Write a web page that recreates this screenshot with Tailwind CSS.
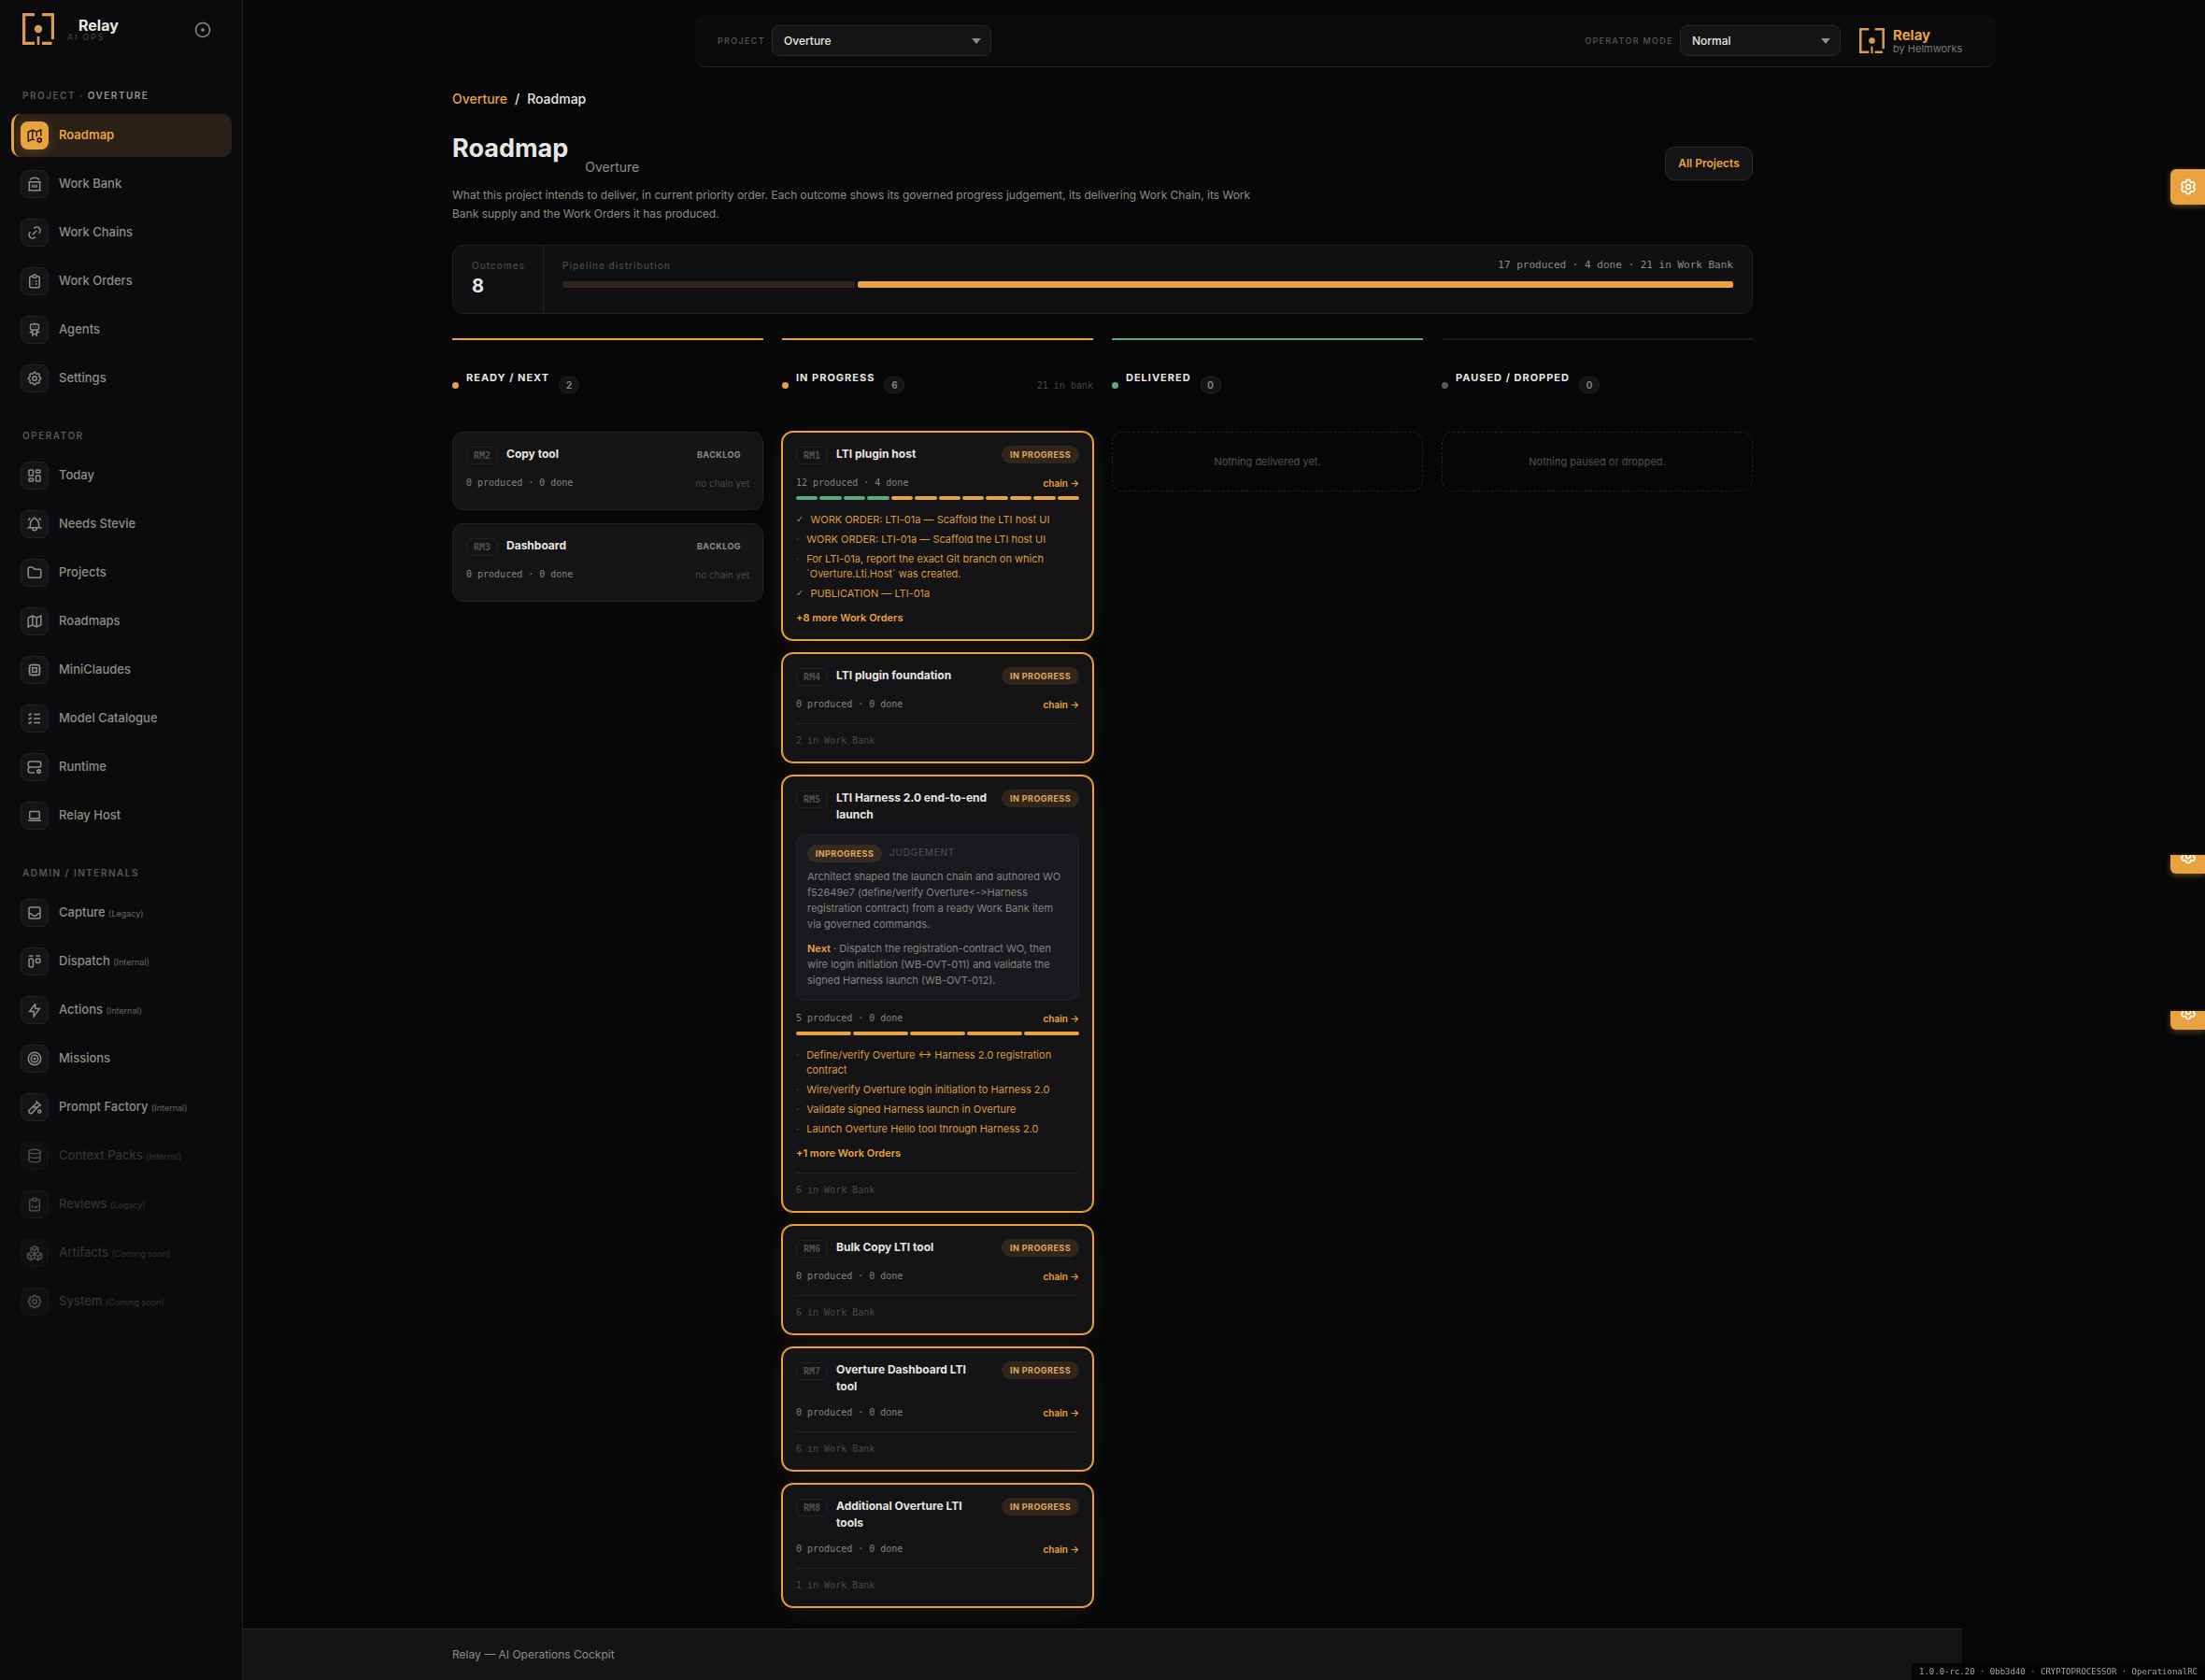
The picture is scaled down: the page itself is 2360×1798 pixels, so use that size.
<!DOCTYPE html>
<html lang="en">

<head>
    <meta charset="UTF-8">
    <meta name="viewport" content="width=device-width, initial-scale=1.0">
    <title>Roadmap - Relay</title>
    <script src="https://cdn.jsdelivr.net/npm/@tailwindcss/browser@4"></script>
</head>

<body class="bg-[#070709] font-['Inter',sans-serif] text-[#e8e6e1]">

    <!-- Icon sprite -->
    <svg class="hidden" xmlns="http://www.w3.org/2000/svg">
        <symbol id="i-logo" viewBox="0 0 34 34">
            <path d="M13 1.500H1.500v31H13M21 1.500h11.500v26.500M21 32.500h10.500" stroke="currentColor" stroke-width="3.400" fill="none" />
            <circle cx="17" cy="17" r="4.200" fill="currentColor" />
            <path d="M17 25v9" stroke="currentColor" stroke-width="2.600" />
        </symbol>
        <symbol id="i-map-cog" viewBox="0 0 24 24">
            <path d="M12 18.500l-3 -1.500l-6 3v-13l6 -3l6 3l6 -3v8.500M9 4v13M15 7v6.500" />
            <circle cx="19" cy="18.500" r="2.500" />
            <path d="M19 14.500v1.500M19 21v1.500M22.500 16.500l-1.300 .75M16.800 19.750l-1.300 .75M15.500 16.500l1.300 .75M21.200 19.750l1.300 .75" />
        </symbol>
        <symbol id="i-bank" viewBox="0 0 24 24">
            <path d="M5 6c2 -2 4 -3 7 -3s5 1 7 3M3 9h18M4.500 9v12M19.500 9v12M3 21h18M9 13v4M12 13v4M15 13v4" />
        </symbol>
        <symbol id="i-link" viewBox="0 0 24 24">
            <path d="M9 15l6 -6M11 6l.463 -.536a5 5 0 0 1 7.071 7.072l-.534 .464M13 18l-.397 .534a5.068 5.068 0 0 1 -7.127 0a4.972 4.972 0 0 1 0 -7.071l.524 -.463" />
        </symbol>
        <symbol id="i-clipboard-list" viewBox="0 0 24 24">
            <path d="M9 5h-2a2 2 0 0 0 -2 2v12a2 2 0 0 0 2 2h10a2 2 0 0 0 2 -2v-12a2 2 0 0 0 -2 -2h-2" />
            <path d="M9 5a2 2 0 0 1 2 -2h2a2 2 0 0 1 0 4h-2a2 2 0 0 1 -2 -2zM8.500 12h1M13 12h2.500M8.500 16h1M13 16h2.500" />
        </symbol>
        <symbol id="i-robot" viewBox="0 0 24 24">
            <path d="M6 6a2 2 0 0 1 2 -2h8a2 2 0 0 1 2 2v4a2 2 0 0 1 -2 2h-8a2 2 0 0 1 -2 -2zM12 2v2M9 12v9M15 12v9M5 16l4 -2M15 14l4 2M9 18h6M9.500 8h1M13.500 8h1" />
        </symbol>
        <symbol id="i-settings" viewBox="0 0 24 24">
            <path d="M10.325 4.317c.426 -1.756 2.924 -1.756 3.350 0a1.724 1.724 0 0 0 2.573 1.066c1.543 -.94 3.310 .826 2.370 2.370a1.724 1.724 0 0 0 1.065 2.572c1.756 .426 1.756 2.924 0 3.350a1.724 1.724 0 0 0 -1.066 2.573c.94 1.543 -.826 3.310 -2.370 2.370a1.724 1.724 0 0 0 -2.572 1.065c-.426 1.756 -2.924 1.756 -3.350 0a1.724 1.724 0 0 0 -2.573 -1.066c-1.543 .94 -3.310 -.826 -2.370 -2.370a1.724 1.724 0 0 0 -1.065 -2.572c-1.756 -.426 -1.756 -2.924 0 -3.350a1.724 1.724 0 0 0 1.066 -2.573c-.94 -1.543 .826 -3.310 2.370 -2.370c1 .608 2.296 .07 2.572 -1.065z" />
            <circle cx="12" cy="12" r="3" />
        </symbol>
        <symbol id="i-dashboard" viewBox="0 0 24 24">
            <rect x="4" y="4" width="6" height="8" rx="1" />
            <rect x="4" y="16" width="6" height="4" rx="1" />
            <rect x="14" y="12" width="6" height="8" rx="1" />
            <rect x="14" y="4" width="6" height="4" rx="1" />
        </symbol>
        <symbol id="i-bell" viewBox="0 0 24 24">
            <path d="M10 5a2 2 0 0 1 4 0a7 7 0 0 1 4 6v3a4 4 0 0 0 2 3h-16a4 4 0 0 0 2 -3v-3a7 7 0 0 1 4 -6M9 17v1a3 3 0 0 0 6 0v-1M21 6.727a11.050 11.050 0 0 0 -2.794 -3.727M3 6.727a11.050 11.050 0 0 1 2.792 -3.727" />
        </symbol>
        <symbol id="i-folder" viewBox="0 0 24 24">
            <path d="M5 4h4l3 3h7a2 2 0 0 1 2 2v8a2 2 0 0 1 -2 2h-14a2 2 0 0 1 -2 -2v-11a2 2 0 0 1 2 -2" />
        </symbol>
        <symbol id="i-map" viewBox="0 0 24 24">
            <path d="M3 7l6 -3l6 3l6 -3v13l-6 3l-6 -3l-6 3v-13M9 4v13M15 7v13" />
        </symbol>
        <symbol id="i-cpu" viewBox="0 0 24 24">
            <rect x="5" y="5" width="14" height="14" rx="1" />
            <path d="M9 9h6v6h-6zM3 10h2M3 14h2M10 3v2M14 3v2M21 10h-2M21 14h-2M14 21v-2M10 21v-2" />
        </symbol>
        <symbol id="i-list-check" viewBox="0 0 24 24">
            <path d="M3.500 5.500l1.500 1.500l2.500 -2.500M3.500 11.500l1.500 1.500l2.500 -2.500M3.500 17.500l1.500 1.500l2.500 -2.500M11 6h9M11 12h9M11 18h9" />
        </symbol>
        <symbol id="i-server-cog" viewBox="0 0 24 24">
            <path d="M6 4h12a3 3 0 0 1 3 3v2a3 3 0 0 1 -3 3h-12a3 3 0 0 1 -3 -3v-2a3 3 0 0 1 3 -3M12 20h-6a3 3 0 0 1 -3 -3v-2a3 3 0 0 1 3 -3h10.500M7 8v.01M7 16v.01" />
            <circle cx="18" cy="18" r="2" />
            <path d="M18 14.500v1.500M18 20v1.500M21.032 16.250l-1.299 .75M16.270 19l-1.300 .75M14.970 16.250l1.300 .75M19.733 19l1.300 .75" />
        </symbol>
        <symbol id="i-laptop" viewBox="0 0 24 24">
            <path d="M3 19h18" />
            <rect x="5" y="6" width="14" height="10" rx="1" />
        </symbol>
        <symbol id="i-inbox" viewBox="0 0 24 24">
            <rect x="4" y="4" width="16" height="16" rx="2" />
            <path d="M4 13h3l3 3h4l3 -3h3" />
        </symbol>
        <symbol id="i-kanban" viewBox="0 0 24 24">
            <path d="M4 4h6M14 4h6" />
            <rect x="4" y="8" width="6" height="12" rx="2" />
            <rect x="14" y="8" width="6" height="6" rx="2" />
        </symbol>
        <symbol id="i-bolt" viewBox="0 0 24 24">
            <path d="M13 3v7h6l-8 11v-7h-6l8 -11" />
        </symbol>
        <symbol id="i-target" viewBox="0 0 24 24">
            <circle cx="12" cy="12" r="1" />
            <circle cx="12" cy="12" r="5" />
            <circle cx="12" cy="12" r="9" />
        </symbol>
        <symbol id="i-tube" viewBox="0 0 24 24">
            <path d="M14 3l7 7M16 5l-12 11.500a3 3 0 0 0 4 4l11.500 -12M9.500 12h6" />
            <circle cx="19" cy="18" r="2" />
        </symbol>
        <symbol id="i-database" viewBox="0 0 24 24">
            <ellipse cx="12" cy="6" rx="8" ry="3" />
            <path d="M4 6v6a8 3 0 0 0 16 0v-6M4 12v6a8 3 0 0 0 16 0v-6" />
        </symbol>
        <symbol id="i-clipboard-check" viewBox="0 0 24 24">
            <path d="M9 5h-2a2 2 0 0 0 -2 2v12a2 2 0 0 0 2 2h10a2 2 0 0 0 2 -2v-12a2 2 0 0 0 -2 -2h-2" />
            <path d="M9 5a2 2 0 0 1 2 -2h2a2 2 0 0 1 0 4h-2a2 2 0 0 1 -2 -2zM9 13v4M12 15.500l1.500 1.500l2.500 -3" />
        </symbol>
        <symbol id="i-packages" viewBox="0 0 24 24">
            <path d="M7 16.500l-5 -3l5 -3l5 3v5.500l-5 3zM2 13.500v5.500l5 3M7 16.545l5 -3.030M17 16.500l-5 -3l5 -3l5 3v5.500l-5 3zM12 19l5 3M17 16.500l5 -3M12 13.500v-5.500l-5 -3l5 -3l5 3v5.500M7 5.030v5.455M12 8l5 -3" />
        </symbol>
        <symbol id="i-cog" viewBox="0 0 24 24">
            <path d="M9.594 3.940c.09-.542.56-.94 1.110-.94h2.593c.55 0 1.020.398 1.110.94l.213 1.281c.063.374.313.686.645.87.074.04.147.083.22.127.325.196.72.257 1.075.124l1.217-.456a1.125 1.125 0 0 1 1.370.49l1.296 2.247a1.125 1.125 0 0 1-.26 1.431l-1.003.827c-.293.241-.438.613-.43.992a7.723 7.723 0 0 1 0 .255c-.008.378.137.75.43.991l1.004.827c.424.35.534.955.26 1.430l-1.298 2.247a1.125 1.125 0 0 1-1.369.491l-1.217-.456c-.355-.133-.75-.072-1.076.124a6.470 6.470 0 0 1-.22.128c-.331.183-.581.495-.644.869l-.213 1.281c-.09.543-.56.94-1.110.94h-2.594c-.55 0-1.019-.398-1.110-.94l-.213-1.281c-.062-.374-.312-.686-.644-.87a6.520 6.520 0 0 1-.22-.127c-.325-.196-.72-.257-1.076-.124l-1.217.456a1.125 1.125 0 0 1-1.369-.49l-1.297-2.247a1.125 1.125 0 0 1 .26-1.431l1.004-.827c.292-.24.437-.613.43-.991a6.932 6.932 0 0 1 0-.255c.007-.38-.138-.751-.43-.992l-1.004-.827a1.125 1.125 0 0 1-.26-1.430l1.297-2.247a1.125 1.125 0 0 1 1.370-.491l1.216.456c.356.133.751.072 1.076-.124.072-.044.146-.086.22-.128.332-.183.582-.495.644-.869z" />
            <circle cx="12" cy="12" r="3" />
        </symbol>
    </svg>

    <div class="flex min-h-screen">

        <!-- Sidebar -->
        <aside class="w-[260px] shrink-0 border-r border-[#222225] bg-[#0b0b0e] pr-[11px] pl-3">
            <div class="flex h-[94px] items-start px-3 pt-[14px]">
                <svg class="size-[34px] shrink-0 text-[#d79a52]"><use href="#i-logo" /></svg>
                <div class="ml-[14px] flex-1 pt-[5px]">
                    <p class="ml-3 text-base leading-4 font-bold">Relay</p>
                    <p class="text-[9px] leading-[10px] tracking-[0.2em] text-[#4b4843]">AI OPS</p>
                </div>
                <button type="button" aria-label="Pin sidebar" class="mt-[9px] mr-[10px] grid size-[18px] place-items-center text-[#8f8a82]">
                    <svg class="size-[18px]" viewBox="0 0 18 18" fill="none"><circle cx="9" cy="9" r="7.500" stroke="currentColor" stroke-width="1.500" /><circle cx="9" cy="9" r="1.800" fill="currentColor" /></svg>
                </button>
            </div>

            <h2 class="mb-3 px-3 text-[10px] leading-4 font-semibold tracking-[0.15em] text-[#5c5850]">PROJECT · <span class="text-[#9b958b]">OVERTURE</span></h2>
            <nav class="mb-[30px] flex flex-col gap-[6px] text-[13px] font-medium text-[#918c83]">
                <a href="#" class="flex h-[46px] items-center gap-[11px] rounded-[10px] border-l-3 border-[#e9a23f] bg-[#2a2016] pl-[7px] font-semibold text-[#e9a23f]">
                    <span class="grid size-[30px] place-items-center rounded-lg bg-[#e9a23f] text-[#2a1c08] shadow-[0_2px_12px_#e9a23f40]"><svg class="size-[18px] fill-none stroke-current stroke-2"><use href="#i-map-cog" /></svg></span>Roadmap</a>
                <a href="#" class="flex h-[46px] items-center gap-[11px] pl-[10px]">
                    <span class="grid size-[30px] place-items-center rounded-lg border border-[#222225] bg-[#141416]"><svg class="size-[18px] fill-none stroke-current stroke-2"><use href="#i-bank" /></svg></span>Work Bank</a>
                <a href="#" class="flex h-[46px] items-center gap-[11px] pl-[10px]">
                    <span class="grid size-[30px] place-items-center rounded-lg border border-[#222225] bg-[#141416]"><svg class="size-[18px] fill-none stroke-current stroke-2"><use href="#i-link" /></svg></span>Work Chains</a>
                <a href="#" class="flex h-[46px] items-center gap-[11px] pl-[10px]">
                    <span class="grid size-[30px] place-items-center rounded-lg border border-[#222225] bg-[#141416]"><svg class="size-[18px] fill-none stroke-current stroke-2"><use href="#i-clipboard-list" /></svg></span>Work Orders</a>
                <a href="#" class="flex h-[46px] items-center gap-[11px] pl-[10px]">
                    <span class="grid size-[30px] place-items-center rounded-lg border border-[#222225] bg-[#141416]"><svg class="size-[18px] fill-none stroke-current stroke-2"><use href="#i-robot" /></svg></span>Agents</a>
                <a href="#" class="flex h-[46px] items-center gap-[11px] pl-[10px]">
                    <span class="grid size-[30px] place-items-center rounded-lg border border-[#222225] bg-[#141416]"><svg class="size-[18px] fill-none stroke-current stroke-2"><use href="#i-settings" /></svg></span>Settings</a>
            </nav>

            <h2 class="mb-3 px-3 text-[10px] leading-4 font-semibold tracking-[0.15em] text-[#5c5850]">OPERATOR</h2>
            <nav class="mb-[30px] flex flex-col gap-[6px] text-[13px] font-medium text-[#918c83]">
                <a href="#" class="flex h-[46px] items-center gap-[11px] pl-[10px]">
                    <span class="grid size-[30px] place-items-center rounded-lg border border-[#222225] bg-[#141416]"><svg class="size-[18px] fill-none stroke-current stroke-2"><use href="#i-dashboard" /></svg></span>Today</a>
                <a href="#" class="flex h-[46px] items-center gap-[11px] pl-[10px]">
                    <span class="grid size-[30px] place-items-center rounded-lg border border-[#222225] bg-[#141416]"><svg class="size-[18px] fill-none stroke-current stroke-2"><use href="#i-bell" /></svg></span>Needs Stevie</a>
                <a href="#" class="flex h-[46px] items-center gap-[11px] pl-[10px]">
                    <span class="grid size-[30px] place-items-center rounded-lg border border-[#222225] bg-[#141416]"><svg class="size-[18px] fill-none stroke-current stroke-2"><use href="#i-folder" /></svg></span>Projects</a>
                <a href="#" class="flex h-[46px] items-center gap-[11px] pl-[10px]">
                    <span class="grid size-[30px] place-items-center rounded-lg border border-[#222225] bg-[#141416]"><svg class="size-[18px] fill-none stroke-current stroke-2"><use href="#i-map" /></svg></span>Roadmaps</a>
                <a href="#" class="flex h-[46px] items-center gap-[11px] pl-[10px]">
                    <span class="grid size-[30px] place-items-center rounded-lg border border-[#222225] bg-[#141416]"><svg class="size-[18px] fill-none stroke-current stroke-2"><use href="#i-cpu" /></svg></span>MiniClaudes</a>
                <a href="#" class="flex h-[46px] items-center gap-[11px] pl-[10px]">
                    <span class="grid size-[30px] place-items-center rounded-lg border border-[#222225] bg-[#141416]"><svg class="size-[18px] fill-none stroke-current stroke-2"><use href="#i-list-check" /></svg></span>Model Catalogue</a>
                <a href="#" class="flex h-[46px] items-center gap-[11px] pl-[10px]">
                    <span class="grid size-[30px] place-items-center rounded-lg border border-[#222225] bg-[#141416]"><svg class="size-[18px] fill-none stroke-current stroke-2"><use href="#i-server-cog" /></svg></span>Runtime</a>
                <a href="#" class="flex h-[46px] items-center gap-[11px] pl-[10px]">
                    <span class="grid size-[30px] place-items-center rounded-lg border border-[#222225] bg-[#141416]"><svg class="size-[18px] fill-none stroke-current stroke-2"><use href="#i-laptop" /></svg></span>Relay Host</a>
            </nav>

            <h2 class="mb-3 px-3 text-[10px] leading-4 font-semibold tracking-[0.15em] text-[#5c5850]">ADMIN / INTERNALS</h2>
            <nav class="flex flex-col gap-[6px] text-[13px] font-medium text-[#918c83]">
                <a href="#" class="flex h-[46px] items-center gap-[11px] pl-[10px]">
                    <span class="grid size-[30px] place-items-center rounded-lg border border-[#222225] bg-[#141416]"><svg class="size-[18px] fill-none stroke-current stroke-2"><use href="#i-inbox" /></svg></span>
                    <span>Capture <small class="text-[9px] font-normal text-[#6a665f]">(Legacy)</small></span></a>
                <a href="#" class="flex h-[46px] items-center gap-[11px] pl-[10px]">
                    <span class="grid size-[30px] place-items-center rounded-lg border border-[#222225] bg-[#141416]"><svg class="size-[18px] fill-none stroke-current stroke-2"><use href="#i-kanban" /></svg></span>
                    <span>Dispatch <small class="text-[9px] font-normal text-[#6a665f]">(Internal)</small></span></a>
                <a href="#" class="flex h-[46px] items-center gap-[11px] pl-[10px]">
                    <span class="grid size-[30px] place-items-center rounded-lg border border-[#222225] bg-[#141416]"><svg class="size-[18px] fill-none stroke-current stroke-2"><use href="#i-bolt" /></svg></span>
                    <span>Actions <small class="text-[9px] font-normal text-[#6a665f]">(Internal)</small></span></a>
                <a href="#" class="flex h-[46px] items-center gap-[11px] pl-[10px]">
                    <span class="grid size-[30px] place-items-center rounded-lg border border-[#222225] bg-[#141416]"><svg class="size-[18px] fill-none stroke-current stroke-2"><use href="#i-target" /></svg></span>Missions</a>
                <a href="#" class="flex h-[46px] items-center gap-[11px] pl-[10px]">
                    <span class="grid size-[30px] place-items-center rounded-lg border border-[#222225] bg-[#141416]"><svg class="size-[18px] fill-none stroke-current stroke-2"><use href="#i-tube" /></svg></span>
                    <span>Prompt Factory <small class="text-[9px] font-normal text-[#6a665f]">(Internal)</small></span></a>
                <!-- not available yet -->
                <a class="flex h-[46px] items-center gap-[11px] pl-[10px] text-[#343230]">
                    <span class="grid size-[30px] place-items-center rounded-lg border border-[#17171a] bg-[#101012] text-[#504d49]"><svg class="size-[18px] fill-none stroke-current stroke-2"><use href="#i-database" /></svg></span>
                    <span>Context Packs <small class="text-[9px] font-normal">(Internal)</small></span></a>
                <a class="flex h-[46px] items-center gap-[11px] pl-[10px] text-[#343230]">
                    <span class="grid size-[30px] place-items-center rounded-lg border border-[#17171a] bg-[#101012] text-[#504d49]"><svg class="size-[18px] fill-none stroke-current stroke-2"><use href="#i-clipboard-check" /></svg></span>
                    <span>Reviews <small class="text-[9px] font-normal">(Legacy)</small></span></a>
                <a class="flex h-[46px] items-center gap-[11px] pl-[10px] text-[#343230]">
                    <span class="grid size-[30px] place-items-center rounded-lg border border-[#17171a] bg-[#101012] text-[#504d49]"><svg class="size-[18px] fill-none stroke-current stroke-2"><use href="#i-packages" /></svg></span>
                    <span>Artifacts <small class="text-[9px] font-normal">(Coming soon)</small></span></a>
                <a class="flex h-[46px] items-center gap-[11px] pl-[10px] text-[#343230]">
                    <span class="grid size-[30px] place-items-center rounded-lg border border-[#17171a] bg-[#101012] text-[#504d49]"><svg class="size-[18px] fill-none stroke-current stroke-2"><use href="#i-settings" /></svg></span>
                    <span>System <small class="text-[9px] font-normal">(Coming soon)</small></span></a>
            </nav>
        </aside>

        <div class="flex min-w-0 flex-1 flex-col">

            <!-- Top bar -->
            <div class="pt-4 pl-[260px]">
                <header class="mx-auto flex h-14 max-w-[1392px] items-center rounded-[10px] border-b border-[#222225] bg-[#0b0b0d] px-6">
                    <label for="project" class="mr-[7px] text-[9px] font-medium tracking-[0.15em] text-[#5c5850]">PROJECT</label>
                    <div class="relative">
                        <select id="project" class="h-[33px] w-[235px] appearance-none rounded-lg border border-[#29292c] bg-[#141416] pl-3 text-xs font-medium text-[#e8e6e1]">
                            <option>Overture</option>
                        </select>
                        <svg class="pointer-events-none absolute top-[14px] right-[11px] h-[6px] w-[10px] fill-[#918c83]" viewBox="0 0 10 6"><path d="M0 0h10l-5 6z" /></svg>
                    </div>
                    <label for="mode" class="mr-[7px] ml-auto text-[9px] font-medium tracking-[0.15em] text-[#5c5850]">OPERATOR MODE</label>
                    <div class="relative">
                        <select id="mode" class="h-[33px] w-[172px] appearance-none rounded-lg border border-[#29292c] bg-[#141416] pl-3 text-xs font-medium text-[#e8e6e1]">
                            <option>Normal</option>
                        </select>
                        <svg class="pointer-events-none absolute top-[14px] right-[11px] h-[6px] w-[10px] fill-[#918c83]" viewBox="0 0 10 6"><path d="M0 0h10l-5 6z" /></svg>
                    </div>
                    <svg class="ml-5 size-[27px] text-[#d79a52]"><use href="#i-logo" /></svg>
                    <div class="mr-[9px] ml-[9px] w-[77px]">
                        <p class="text-[15px] leading-4 font-bold text-[#e9a23f]">Relay</p>
                        <p class="text-[11px] leading-3 text-[#7d7972]">by Helmworks</p>
                    </div>
                </header>
            </div>

            <!-- Page -->
            <div class="flex flex-1 flex-col pr-[260px]">
                <main class="mx-auto w-full max-w-[1392px] flex-1 pt-6 pb-5">
                    <nav class="flex gap-2 text-sm leading-5 font-medium">
                        <a href="#" class="text-[#e9a23f]">Overture</a><span>/</span><span>Roadmap</span>
                    </nav>

                    <div class="mt-[27px] flex items-start justify-between">
                        <div>
                            <div class="flex items-end gap-[18px]">
                                <h1 class="mb-[15px] text-[27px] leading-8 font-bold">Roadmap</h1>
                                <p class="mb-[2px] text-sm leading-[18px] text-[#918c83]">Overture</p>
                            </div>
                            <p class="mt-[9px] max-w-[872px] text-xs leading-5 text-[#918c83]">What this project intends to deliver, in current priority order. Each outcome shows its governed progress judgement, its delivering Work Chain, its Work Bank supply and the Work Orders it has produced.</p>
                        </div>
                        <button type="button" class="mt-[14px] h-9 w-[94px] rounded-[10px] border border-[#29292c] bg-[#141416] text-xs font-semibold text-[#e9a23f]">All Projects</button>
                    </div>

                    <!-- Summary -->
                    <section class="mt-[23px] flex h-[74px] rounded-xl border border-[#222225] bg-[#101012]">
                        <div class="w-[97px] border-r border-[#222225] pt-[13px] pl-5">
                            <p class="text-[10px] leading-4 font-medium tracking-[0.1em] text-[#4b4843]">Outcomes</p>
                            <p class="text-xl leading-7 font-bold">8</p>
                        </div>
                        <div class="flex-1 px-5 pt-[13px]">
                            <div class="flex items-center justify-between leading-4">
                                <p class="text-[10px] font-medium tracking-[0.1em] text-[#4b4843]">Pipeline distribution</p>
                                <p class="font-['DejaVu_Sans_Mono',monospace] text-[11px] text-[#918c83]">17 produced · 4 done · 21 in Work Bank</p>
                            </div>
                            <div class="mt-[9px] flex h-[7px] gap-[3px]">
                                <div class="rounded-[2px] bg-[#2e2419]" style="flex: 2"></div>
                                <div class="rounded-[2px] bg-[#e9a23f]" style="flex: 6"></div>
                            </div>
                        </div>
                    </section>

                    <!-- Board -->
                    <div class="mt-[26px] grid grid-cols-4 items-start gap-5">

                        <section class="border-t-2 border-[#e9a23f]">
                            <header class="mb-[2px] flex h-24 items-center">
                                <span class="size-[7px] rounded-full bg-[#e9a23f]"></span>
                                <h2 class="mb-4 ml-2 text-[11px] leading-4 font-bold tracking-[0.09em]">READY / NEXT</h2>
                                <span class="ml-[10px] grid h-[18px] w-[22px] place-items-center rounded-full border border-[#222225] bg-[#141416] text-[10px] font-semibold text-[#918c83]">2</span>
                            </header>
                            <div class="flex flex-col gap-[14px]">
                                <article class="rounded-xl border border-[#222225] bg-[#141416] p-[14px]">
                                    <div class="mb-3 flex items-start">
                                        <span class="mt-px h-[19px] w-[34px] rounded-md border border-[#222225] text-center font-['DejaVu_Sans_Mono',monospace] text-[10px] leading-[17px] font-bold text-[#54514c]">RM2</span>
                                        <h3 class="ml-[9px] flex-1 text-xs leading-[18px] font-bold">Copy tool</h3>
                                        <span class="h-[19px] w-[65px] rounded-full bg-[#161618] text-center text-[9px] leading-[19px] font-bold tracking-[0.05em] text-[#918c83]">BACKLOG</span>
                                    </div>
                                    <div class="mb-[6px] flex items-center justify-between leading-4">
                                        <span class="font-['DejaVu_Sans_Mono',monospace] text-[10px] text-[#87837b]">0 produced · 0 done</span>
                                        <span class="text-[10px] text-[#4b4843]">no chain yet</span>
                                    </div>
                                </article>
                                <article class="rounded-xl border border-[#222225] bg-[#141416] p-[14px]">
                                    <div class="mb-3 flex items-start">
                                        <span class="mt-px h-[19px] w-[34px] rounded-md border border-[#222225] text-center font-['DejaVu_Sans_Mono',monospace] text-[10px] leading-[17px] font-bold text-[#54514c]">RM3</span>
                                        <h3 class="ml-[9px] flex-1 text-xs leading-[18px] font-bold">Dashboard</h3>
                                        <span class="h-[19px] w-[65px] rounded-full bg-[#161618] text-center text-[9px] leading-[19px] font-bold tracking-[0.05em] text-[#918c83]">BACKLOG</span>
                                    </div>
                                    <div class="mb-[6px] flex items-center justify-between leading-4">
                                        <span class="font-['DejaVu_Sans_Mono',monospace] text-[10px] text-[#87837b]">0 produced · 0 done</span>
                                        <span class="text-[10px] text-[#4b4843]">no chain yet</span>
                                    </div>
                                </article>
                            </div>
                        </section>

                        <section class="border-t-2 border-[#e9a23f]">
                            <header class="mb-[2px] flex h-24 items-center">
                                <span class="size-[7px] rounded-full bg-[#e9a23f]"></span>
                                <h2 class="mb-4 ml-2 text-[11px] leading-4 font-bold tracking-[0.09em]">IN PROGRESS</h2>
                                <span class="ml-[10px] grid h-[18px] w-[22px] place-items-center rounded-full border border-[#222225] bg-[#141416] text-[10px] font-semibold text-[#918c83]">6</span>
                                <span class="ml-auto font-['DejaVu_Sans_Mono',monospace] text-[10px] text-[#4b4843]">21 in bank</span>
                            </header>
                            <div class="flex flex-col gap-[14px]">
                                <article class="rounded-xl border border-[#e9a23f] bg-[#141416] p-[14px] shadow-[0_0_0_1px_#e9a23f,0_4px_24px_#e9a23f1a]">
                                    <div class="mb-3 flex items-start">
                                        <span class="mt-px h-[19px] w-[34px] rounded-md border border-[#222225] text-center font-['DejaVu_Sans_Mono',monospace] text-[10px] leading-[17px] font-bold text-[#54514c]">RM1</span>
                                        <h3 class="mr-[14px] ml-[9px] flex-1 text-xs leading-[18px] font-bold">LTI plugin host</h3>
                                        <span class="h-[19px] w-[83px] rounded-full bg-[#30261a] text-center text-[9px] leading-[19px] font-bold tracking-[0.05em] text-[#e0a760]">IN PROGRESS</span>
                                    </div>
                                    <div class="mb-[6px] flex items-center justify-between leading-4">
                                        <span class="font-['DejaVu_Sans_Mono',monospace] text-[10px] text-[#87837b]">12 produced · 4 done</span>
                                        <a href="#" class="text-[10px] font-semibold text-[#e9a23f]">chain →</a>
                                    </div>
                                    <div class="flex h-1 gap-[2px]">
                                        <i class="flex-1 rounded-full bg-[#56ad7c]"></i>
                                        <i class="flex-1 rounded-full bg-[#56ad7c]"></i>
                                        <i class="flex-1 rounded-full bg-[#56ad7c]"></i>
                                        <i class="flex-1 rounded-full bg-[#56ad7c]"></i>
                                        <i class="flex-1 rounded-full bg-[#e9a23f]"></i>
                                        <i class="flex-1 rounded-full bg-[#e9a23f]"></i>
                                        <i class="flex-1 rounded-full bg-[#e9a23f]"></i>
                                        <i class="flex-1 rounded-full bg-[#e9a23f]"></i>
                                        <i class="flex-1 rounded-full bg-[#e9a23f]"></i>
                                        <i class="flex-1 rounded-full bg-[#e9a23f]"></i>
                                        <i class="flex-1 rounded-full bg-[#e9a23f]"></i>
                                        <i class="flex-1 rounded-full bg-[#e9a23f]"></i>
                                    </div>
                                    <ul class="mt-[13px] flex flex-col gap-[5px] text-[11px] leading-4 text-[#dd9b3d]">
                                        <li class="flex gap-[7px]"><span class="font-['DejaVu_Sans',sans-serif] text-[10px] text-[#56ad7c]">✓</span><a href="#">WORK ORDER: LTI-01a — Scaffold the LTI host UI</a></li>
                                        <li class="flex gap-2"><span class="text-[#5c5850]">·</span><a href="#">WORK ORDER: LTI-01a — Scaffold the LTI host UI</a></li>
                                        <li class="flex gap-2"><span class="text-[#5c5850]">·</span><a href="#">For LTI-01a, report the exact Git branch on which `Overture.Lti.Host` was created.</a></li>
                                        <li class="flex gap-[7px]"><span class="font-['DejaVu_Sans',sans-serif] text-[10px] text-[#56ad7c]">✓</span><a href="#">PUBLICATION — LTI-01a</a></li>
                                    </ul>
                                    <button type="button" class="mt-[10px] block text-[11px] leading-[17px] font-semibold text-[#e9a23f]">+8 more Work Orders</button>
                                </article>

                                <article class="rounded-xl border border-[#e9a23f] bg-[#141416] p-[14px] shadow-[0_0_0_1px_#e9a23f,0_4px_24px_#e9a23f1a]">
                                    <div class="mb-3 flex items-start">
                                        <span class="mt-px h-[19px] w-[34px] rounded-md border border-[#222225] text-center font-['DejaVu_Sans_Mono',monospace] text-[10px] leading-[17px] font-bold text-[#54514c]">RM4</span>
                                        <h3 class="mr-[14px] ml-[9px] flex-1 text-xs leading-[18px] font-bold">LTI plugin foundation</h3>
                                        <span class="h-[19px] w-[83px] rounded-full bg-[#30261a] text-center text-[9px] leading-[19px] font-bold tracking-[0.05em] text-[#e0a760]">IN PROGRESS</span>
                                    </div>
                                    <div class="mb-3 flex items-center justify-between leading-4">
                                        <span class="font-['DejaVu_Sans_Mono',monospace] text-[10px] text-[#87837b]">0 produced · 0 done</span>
                                        <a href="#" class="text-[10px] font-semibold text-[#e9a23f]">chain →</a>
                                    </div>
                                    <p class="border-t border-[#222225] pt-[10px] font-['DejaVu_Sans_Mono',monospace] text-[10px] leading-4 text-[#4b4843]">2 in Work Bank</p>
                                </article>

                                <article class="rounded-xl border border-[#e9a23f] bg-[#141416] p-[14px] shadow-[0_0_0_1px_#e9a23f,0_4px_24px_#e9a23f1a]">
                                    <div class="mb-3 flex items-start">
                                        <span class="mt-px h-[19px] w-[34px] rounded-md border border-[#222225] text-center font-['DejaVu_Sans_Mono',monospace] text-[10px] leading-[17px] font-bold text-[#54514c]">RM5</span>
                                        <h3 class="mr-[14px] ml-[9px] flex-1 text-xs leading-[18px] font-bold">LTI Harness 2.0 end-to-end launch</h3>
                                        <span class="h-[19px] w-[83px] rounded-full bg-[#30261a] text-center text-[9px] leading-[19px] font-bold tracking-[0.05em] text-[#e0a760]">IN PROGRESS</span>
                                    </div>
                                    <div class="rounded-[10px] border border-[#222228] bg-[#191a20] px-[11px] pt-[10px] pb-3 text-[11px] leading-[17px] text-[#87837b]">
                                        <div class="flex items-start gap-2">
                                            <span class="h-[19px] w-20 rounded-full bg-[#352b22] text-center text-[9px] leading-[19px] font-bold tracking-[0.05em] text-[#e0a760]">INPROGRESS</span>
                                            <span class="text-[10px] tracking-[0.08em] text-[#54514c]">JUDGEMENT</span>
                                        </div>
                                        <p class="mt-[7px] [font-feature-settings:'calt'_0]">Architect shaped the launch chain and authored WO f52649e7 (define/verify Overture&lt;-&gt;Harness registration contract) from a ready Work Bank item via governed commands.</p>
                                        <p class="mt-[9px]"><b class="font-semibold text-[#e9a23f]">Next</b> · Dispatch the registration-contract WO, then wire login initiation (WB-OVT-011) and validate the signed Harness launch (WB-OVT-012).</p>
                                    </div>
                                    <div class="mt-[11px] mb-[6px] flex items-center justify-between leading-4">
                                        <span class="font-['DejaVu_Sans_Mono',monospace] text-[10px] text-[#87837b]">5 produced · 0 done</span>
                                        <a href="#" class="text-[10px] font-semibold text-[#e9a23f]">chain →</a>
                                    </div>
                                    <div class="flex h-1 gap-[2px]">
                                        <i class="flex-1 rounded-full bg-[#e9a23f]"></i>
                                        <i class="flex-1 rounded-full bg-[#e9a23f]"></i>
                                        <i class="flex-1 rounded-full bg-[#e9a23f]"></i>
                                        <i class="flex-1 rounded-full bg-[#e9a23f]"></i>
                                        <i class="flex-1 rounded-full bg-[#e9a23f]"></i>
                                    </div>
                                    <ul class="mt-[13px] flex flex-col gap-[5px] text-[11px] leading-4 text-[#dd9b3d]">
                                        <li class="flex gap-2"><span class="text-[#5c5850]">·</span><a href="#">Define/verify Overture ↔ Harness 2.0 registration contract</a></li>
                                        <li class="flex gap-2"><span class="text-[#5c5850]">·</span><a href="#">Wire/verify Overture login initiation to Harness 2.0</a></li>
                                        <li class="flex gap-2"><span class="text-[#5c5850]">·</span><a href="#">Validate signed Harness launch in Overture</a></li>
                                        <li class="flex gap-2"><span class="text-[#5c5850]">·</span><a href="#">Launch Overture Hello tool through Harness 2.0</a></li>
                                    </ul>
                                    <button type="button" class="mt-[10px] mb-3 block text-[11px] leading-[17px] font-semibold text-[#e9a23f]">+1 more Work Orders</button>
                                    <p class="border-t border-[#222225] pt-[10px] font-['DejaVu_Sans_Mono',monospace] text-[10px] leading-4 text-[#4b4843]">6 in Work Bank</p>
                                </article>

                                <article class="rounded-xl border border-[#e9a23f] bg-[#141416] p-[14px] shadow-[0_0_0_1px_#e9a23f,0_4px_24px_#e9a23f1a]">
                                    <div class="mb-3 flex items-start">
                                        <span class="mt-px h-[19px] w-[34px] rounded-md border border-[#222225] text-center font-['DejaVu_Sans_Mono',monospace] text-[10px] leading-[17px] font-bold text-[#54514c]">RM6</span>
                                        <h3 class="mr-[14px] ml-[9px] flex-1 text-xs leading-[18px] font-bold">Bulk Copy LTI tool</h3>
                                        <span class="h-[19px] w-[83px] rounded-full bg-[#30261a] text-center text-[9px] leading-[19px] font-bold tracking-[0.05em] text-[#e0a760]">IN PROGRESS</span>
                                    </div>
                                    <div class="mb-3 flex items-center justify-between leading-4">
                                        <span class="font-['DejaVu_Sans_Mono',monospace] text-[10px] text-[#87837b]">0 produced · 0 done</span>
                                        <a href="#" class="text-[10px] font-semibold text-[#e9a23f]">chain →</a>
                                    </div>
                                    <p class="border-t border-[#222225] pt-[10px] font-['DejaVu_Sans_Mono',monospace] text-[10px] leading-4 text-[#4b4843]">6 in Work Bank</p>
                                </article>

                                <article class="rounded-xl border border-[#e9a23f] bg-[#141416] p-[14px] shadow-[0_0_0_1px_#e9a23f,0_4px_24px_#e9a23f1a]">
                                    <div class="mb-[11px] flex items-start">
                                        <span class="mt-px h-[19px] w-[34px] rounded-md border border-[#222225] text-center font-['DejaVu_Sans_Mono',monospace] text-[10px] leading-[17px] font-bold text-[#54514c]">RM7</span>
                                        <h3 class="mr-[14px] ml-[9px] flex-1 text-xs leading-[18px] font-bold">Overture Dashboard LTI tool</h3>
                                        <span class="h-[19px] w-[83px] rounded-full bg-[#30261a] text-center text-[9px] leading-[19px] font-bold tracking-[0.05em] text-[#e0a760]">IN PROGRESS</span>
                                    </div>
                                    <div class="mb-3 flex items-center justify-between leading-4">
                                        <span class="font-['DejaVu_Sans_Mono',monospace] text-[10px] text-[#87837b]">0 produced · 0 done</span>
                                        <a href="#" class="text-[10px] font-semibold text-[#e9a23f]">chain →</a>
                                    </div>
                                    <p class="border-t border-[#222225] pt-[10px] font-['DejaVu_Sans_Mono',monospace] text-[10px] leading-4 text-[#4b4843]">6 in Work Bank</p>
                                </article>

                                <article class="rounded-xl border border-[#e9a23f] bg-[#141416] p-[14px] shadow-[0_0_0_1px_#e9a23f,0_4px_24px_#e9a23f1a]">
                                    <div class="mb-[11px] flex items-start">
                                        <span class="mt-px h-[19px] w-[34px] rounded-md border border-[#222225] text-center font-['DejaVu_Sans_Mono',monospace] text-[10px] leading-[17px] font-bold text-[#54514c]">RM8</span>
                                        <h3 class="mr-[14px] ml-[9px] flex-1 text-xs leading-[18px] font-bold">Additional Overture LTI tools</h3>
                                        <span class="h-[19px] w-[83px] rounded-full bg-[#30261a] text-center text-[9px] leading-[19px] font-bold tracking-[0.05em] text-[#e0a760]">IN PROGRESS</span>
                                    </div>
                                    <div class="mb-3 flex items-center justify-between leading-4">
                                        <span class="font-['DejaVu_Sans_Mono',monospace] text-[10px] text-[#87837b]">0 produced · 0 done</span>
                                        <a href="#" class="text-[10px] font-semibold text-[#e9a23f]">chain →</a>
                                    </div>
                                    <p class="border-t border-[#222225] pt-[10px] font-['DejaVu_Sans_Mono',monospace] text-[10px] leading-4 text-[#4b4843]">1 in Work Bank</p>
                                </article>
                            </div>
                        </section>

                        <section class="border-t-2 border-[#56ad7c]">
                            <header class="mb-[2px] flex h-24 items-center">
                                <span class="size-[7px] rounded-full bg-[#56ad7c]"></span>
                                <h2 class="mb-4 ml-2 text-[11px] leading-4 font-bold tracking-[0.09em]">DELIVERED</h2>
                                <span class="ml-[10px] grid h-[18px] w-[22px] place-items-center rounded-full border border-[#222225] bg-[#141416] text-[10px] font-semibold text-[#918c83]">0</span>
                            </header>
                            <p class="grid h-16 place-items-center rounded-xl border border-dashed border-[#222225] text-[11px] text-[#54514c]">Nothing delivered yet.</p>
                        </section>

                        <section class="border-t-2 border-[#1a1a1c]">
                            <header class="mb-[2px] flex h-24 items-center">
                                <span class="size-[7px] rounded-full bg-[#5c5850]"></span>
                                <h2 class="mb-4 ml-2 text-[11px] leading-4 font-bold tracking-[0.09em]">PAUSED / DROPPED</h2>
                                <span class="ml-[10px] grid h-[18px] w-[22px] place-items-center rounded-full border border-[#222225] bg-[#141416] text-[10px] font-semibold text-[#918c83]">0</span>
                            </header>
                            <p class="grid h-16 place-items-center rounded-xl border border-dashed border-[#222225] text-[11px] text-[#54514c]">Nothing paused or dropped.</p>
                        </section>
                    </div>
                </main>

                <footer class="border-t border-[#29292c] bg-[#141416]">
                    <p class="mx-auto max-w-[1392px] py-[18px] text-xs leading-[18px] text-[#918c83]">Relay — AI Operations Cockpit</p>
                </footer>
            </div>
        </div>
    </div>

    <!-- Edge tabs -->
    <button type="button" aria-label="Settings" class="fixed top-[181px] right-0 grid h-[38px] w-[37px] place-items-center rounded-l-md bg-[#e9a23f] text-white shadow-[0_2px_6px_#e9a23f66]"><svg class="size-5 fill-none stroke-current stroke-2"><use href="#i-cog" /></svg></button>
    <button type="button" aria-label="Settings" class="fixed top-[915px] right-0 flex h-5 w-[37px] items-end justify-center overflow-hidden rounded-bl-md bg-[#e9a23f] pb-[9px] text-white shadow-[0_2px_6px_#e9a23f66]"><svg class="size-5 shrink-0 fill-none stroke-current stroke-2"><use href="#i-cog" /></svg></button>
    <button type="button" aria-label="Settings" class="fixed top-[1082px] right-0 flex h-5 w-[37px] items-end justify-center overflow-hidden rounded-bl-md bg-[#e9a23f] pb-[9px] text-white shadow-[0_2px_6px_#e9a23f66]"><svg class="size-5 shrink-0 fill-none stroke-current stroke-2"><use href="#i-cog" /></svg></button>

    <!-- Build info -->
    <p class="fixed right-0 bottom-0 rounded-tl bg-black/70 px-2 font-['DejaVu_Sans_Mono',monospace] text-[9px] leading-[18px] text-[#a3a3a3]">1.0.0-rc.20 · 0bb3d40 · CRYPTOPROCESSOR · OperationalRC</p>

</body>

</html>
